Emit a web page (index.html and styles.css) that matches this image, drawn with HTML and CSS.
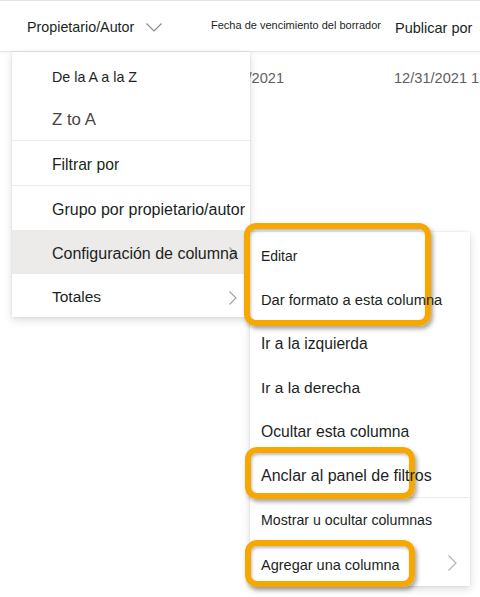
FILE: index.html
```html
<!DOCTYPE html>
<html lang="es">
<head>
<meta charset="utf-8">
<title>Menú de columna</title>
<link rel="stylesheet" href="styles.css">
</head>
<body>
<div class="page">
  <div class="topline"></div>
  <div class="header">
    <div class="hcol hcol-owner">
      <span class="h-owner">Propietario/Autor</span>
      <svg class="hchev" width="16" height="9" viewBox="0 0 16 9"><path d="M0.5 0.5 L8 8 L15.5 0.5" fill="none" stroke="#8a8886" stroke-width="1.1"/></svg>
    </div>
    <div class="hcol hcol-date"><span class="h-date">Fecha de vencimiento del borrador</span></div>
    <div class="hcol hcol-pub"><span class="h-pub">Publicar por</span></div>
  </div>
  <div class="row">
    <div class="rcol rcol-owner"></div>
    <div class="rcol rcol-date">12/31/2021</div>
    <div class="rcol rcol-pub">12/31/2021 12:00 AM</div>
  </div>

  <div class="menu main-menu">
    <div class="item i-az">De la A a la Z</div>
    <div class="item i-za">Z to A</div>
    <div class="sep"></div>
    <div class="item i-filter">Filtrar por</div>
    <div class="sep"></div>
    <div class="item i-group">Grupo por propietario/autor</div>
    <div class="item i-config active">
      <svg class="rchev" width="8" height="14" viewBox="0 0 8 14"><path d="M0.5 0.5 L7 7 L0.5 13.5" fill="none" stroke="#a19f9d" stroke-width="1.1"/></svg>
      <span class="label">Configuración de columna</span>
    </div>
    <div class="item i-totals">
      <span class="label">Totales</span>
      <svg class="rchev" width="8" height="14" viewBox="0 0 8 14"><path d="M0.5 0.5 L7 7 L0.5 13.5" fill="none" stroke="#a19f9d" stroke-width="1.1"/></svg>
    </div>
  </div>

  <div class="menu sub-menu">
    <div class="item s-edit"><span class="label">Editar</span></div>
    <div class="item s-format"><span class="label">Dar formato a esta columna</span></div>
    <div class="item s-left"><span class="label">Ir a la izquierda</span></div>
    <div class="item s-right"><span class="label">Ir a la derecha</span></div>
    <div class="item s-hide"><span class="label">Ocultar esta columna</span></div>
    <div class="item s-pin"><span class="label">Anclar al panel de filtros</span></div>
    <div class="sep"></div>
    <div class="item s-show"><span class="label">Mostrar u ocultar columnas</span></div>
    <div class="item s-add">
      <span class="label">Agregar una columna</span>
      <svg class="rchev sub-chev" width="9" height="16" viewBox="0 0 9 16"><path d="M0.5 0.5 L8 8 L0.5 15.5" fill="none" stroke="#b3b0ad" stroke-width="1.1"/></svg>
    </div>
  </div>

  <div class="mark mark-1"></div>
  <div class="mark mark-2"></div>
  <div class="mark mark-3"></div>
</div>
</body>
</html>
```
FILE: styles.css
```css
html, body {
  margin: 0;
  padding: 0;
  background: #ffffff;
}

.page {
  position: relative;
  width: 480px;
  height: 597px;
  overflow: hidden;
  font-family: "Liberation Sans", Arial, sans-serif;
  color: #201f1e;
}

.topline {
  height: 1px;
  background: #e6e6e6;
}

.header {
  display: flex;
  align-items: center;
  height: 50px;
  border-bottom: 1px solid #e8e8e8;
  box-shadow: 0 1px 3px rgba(0, 0, 0, 0.05);
}

.hcol {
  display: flex;
  align-items: center;
  flex-shrink: 0;
  white-space: nowrap;
}

.hcol-owner {
  width: 211px;
  padding-left: 27px;
  box-sizing: border-box;
  gap: 12px;
}

.h-owner {
  font-size: 14.3px;
  color: #201f1e;
  margin-top: 2px;
}

.hchev {
  display: block;
  margin-top: 2px;
}

.hcol-date {
  width: 184px;
}

.h-date {
  font-size: 11px;
  color: #201f1e;
  margin-top: -2px;
}

.h-pub {
  font-size: 14.5px;
  color: #201f1e;
  margin-top: 4px;
}

.row {
  display: flex;
  align-items: center;
  height: 50px;
  font-size: 14.6px;
  color: #605e5c;
}

.rcol {
  white-space: nowrap;
  flex-shrink: 0;
  padding-top: 2px;
}

.rcol-owner {
  width: 211px;
}

.rcol-date {
  width: 183px;
}

/* menus */
.menu {
  position: absolute;
  background: #ffffff;
  box-shadow: 0 3px 8px rgba(0, 0, 0, 0.14), 0 0 2px rgba(0, 0, 0, 0.1);
}

.main-menu {
  left: 12px;
  top: 52px;
  width: 238px;
  padding-top: 1px;
}

.sub-menu {
  left: 250px;
  top: 232px;
  width: 220px;
  padding-top: 1px;
}

.item {
  position: relative;
  display: flex;
  align-items: center;
  box-sizing: border-box;
  height: 44px;
  padding-top: 3px;
  white-space: nowrap;
  color: #201f1e;
}

.main-menu .item {
  padding-left: 40px;
}

.sub-menu .item {
  padding-left: 11px;
  padding-top: 2px;
}

.sub-menu .s-show {
  padding-top: 0;
}

.sep {
  height: 1px;
  background: #edebe9;
}

.i-az { font-size: 14.3px; }
.i-za { font-size: 16.8px; color: #484644; height: 43px; }
.i-filter { font-size: 15.7px; }
.i-group { font-size: 16px; }
.i-config { font-size: 16px; }
.i-totals { font-size: 15.5px; height: 43px; }

.active {
  background: #edebe9;
}

.rchev {
  position: absolute;
  left: 217px;
  top: 17px;
}

.i-config .rchev {
  top: 17px;
}

.label {
  position: relative;
  z-index: 6;
}

.s-edit { font-size: 13.9px; }
.s-format { font-size: 14.7px; }
.s-left { font-size: 15.6px; }
.s-right { font-size: 15.5px; }
.s-hide { font-size: 15.7px; }
.s-pin { font-size: 16px; }
.s-show { font-size: 14.2px; }
.s-add { font-size: 14.5px; }

.sub-chev {
  left: 198px;
  top: 13px;
}

/* annotation highlights */
.mark {
  position: absolute;
  box-sizing: border-box;
  border: 6px solid #f6a800;
  border-radius: 12px;
  box-shadow: 2px 3px 4px rgba(0, 0, 0, 0.35), inset 1px 2px 3px rgba(0, 0, 0, 0.25);
  z-index: 5;
}

.mark-1 {
  left: 244px;
  top: 223px;
  width: 187px;
  height: 103px;
}

.mark-2 {
  left: 245px;
  top: 447px;
  width: 170px;
  height: 52px;
}

.mark-3 {
  left: 245px;
  top: 540px;
  width: 170px;
  height: 47px;
}
```
